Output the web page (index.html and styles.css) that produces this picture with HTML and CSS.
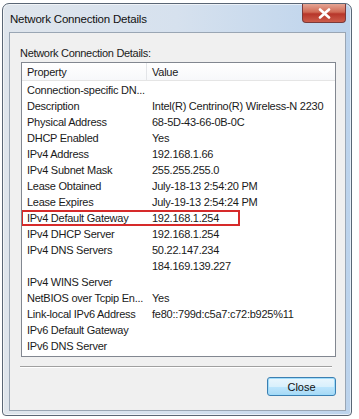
FILE: index.html
```html
<!DOCTYPE html>
<html lang="en">
<head>
    <meta charset="UTF-8">
    <meta name="viewport" content="width=device-width, initial-scale=1.0">
    <title>Network Connection Details</title>
    <link rel="stylesheet" href="styles.css">
</head>
<body>
    <div class="window">
        <div class="titlebar">
            <span class="title">Network Connection Details</span>
            <button class="close-x" aria-label="Close">
                <svg width="13" height="11" viewBox="0 0 13 11">
                    <path d="M2 1.5 L11 9.5 M11 1.5 L2 9.5" stroke="#fff" stroke-width="2.6" stroke-linecap="round"/>
                </svg>
            </button>
        </div>

        <div class="client">
            <div class="label">Network Connection Details:</div>

            <div class="listbox">
                <div class="row header">
                    <div class="cell">Property</div>
                    <div class="cell value">Value</div>
                </div>
                <div class="row"><div class="cell">Connection-specific DN...</div><div class="cell value"></div></div>
                <div class="row"><div class="cell">Description</div><div class="cell value">Intel(R) Centrino(R) Wireless-N 2230</div></div>
                <div class="row"><div class="cell">Physical Address</div><div class="cell value">68-5D-43-66-0B-0C</div></div>
                <div class="row"><div class="cell">DHCP Enabled</div><div class="cell value">Yes</div></div>
                <div class="row"><div class="cell">IPv4 Address</div><div class="cell value">192.168.1.66</div></div>
                <div class="row"><div class="cell">IPv4 Subnet Mask</div><div class="cell value">255.255.255.0</div></div>
                <div class="row"><div class="cell">Lease Obtained</div><div class="cell value">July-18-13 2:54:20 PM</div></div>
                <div class="row"><div class="cell">Lease Expires</div><div class="cell value">July-19-13 2:54:24 PM</div></div>
                <div class="row marked"><div class="cell">IPv4 Default Gateway</div><div class="cell value">192.168.1.254</div></div>
                <div class="row"><div class="cell">IPv4 DHCP Server</div><div class="cell value">192.168.1.254</div></div>
                <div class="row"><div class="cell">IPv4 DNS Servers</div><div class="cell value">50.22.147.234</div></div>
                <div class="row"><div class="cell"></div><div class="cell value">184.169.139.227</div></div>
                <div class="row"><div class="cell">IPv4 WINS Server</div><div class="cell value"></div></div>
                <div class="row"><div class="cell">NetBIOS over Tcpip En...</div><div class="cell value">Yes</div></div>
                <div class="row"><div class="cell">Link-local IPv6 Address</div><div class="cell value">fe80::799d:c5a7:c72:b925%11</div></div>
                <div class="row"><div class="cell">IPv6 Default Gateway</div><div class="cell value"></div></div>
                <div class="row"><div class="cell">IPv6 DNS Server</div><div class="cell value"></div></div>
            </div>

            <div class="separator"></div>

            <div class="actions">
                <button class="btn">Close</button>
            </div>
        </div>
    </div>
</body>
</html>
```

FILE: styles.css
```css
body {
    margin: 0;
    background: #fff;
    font-family: "Liberation Sans", Arial, sans-serif;
    font-size: 11px;
    color: #1a1a1a;
}

.window {
    margin: 3px 0 0 2px;
    width: 350px;
    height: 413px;
    box-sizing: border-box;
    border: 1px solid #5a6675;
    border-radius: 7px 7px 4px 4px;
    background: linear-gradient(90deg, #dfe5ec 0%, #d6e1ee 50%, #bcd3ec 100%);
    padding: 0 5px 4px 6px;
    display: flex;
    flex-direction: column;
    box-shadow: inset 0 0 0 1px rgba(255,255,255,0.6);
}

.titlebar {
    height: 28px;
    display: flex;
    align-items: flex-start;
    justify-content: space-between;
}

.title {
    font-size: 11.5px;
    letter-spacing: -0.2px;
    color: #111;
    padding: 9px 0 0 1px;
}

.close-x {
    width: 44px;
    height: 19px;
    border: 1px solid #7a3a3a;
    border-top: none;
    border-radius: 0 0 4px 4px;
    background: linear-gradient(#e5a594 0%, #d06a55 45%, #b7362a 55%, #cc5c4a 100%);
    display: flex;
    align-items: center;
    justify-content: center;
    padding: 0;
}

.client {
    flex: 1;
    background: #f0f0f0;
    border: 1px solid #9aa6b4;
    padding: 10px 9px 0 10px;
    display: flex;
    flex-direction: column;
}

.label {
    font-size: 11px;
    letter-spacing: -0.3px;
    color: #1a1a1a;
    height: 15px;
    padding-top: 4px;
}

.listbox {
    margin-left: 1px;
    height: 295px;
    box-sizing: border-box;
    background: #fff;
    border: 1px solid #828790;
    overflow: hidden;
}

.row {
    display: grid;
    grid-template-columns: 125px 1fr;
    height: 16px;
    line-height: 16px;
    font-size: 11px;
    letter-spacing: -0.25px;
    white-space: nowrap;
}

.row.header {
    height: 18px;
    line-height: 18px;
    box-sizing: border-box;
    margin-bottom: 1px;
    background: linear-gradient(#ffffff, #f7f8fa);
    border-bottom: 1px solid #e5e5e5;
}

.row.header .cell:first-child {
    border-right: 1px solid #e3e5e8;
}

.cell {
    padding-left: 5px;
    overflow: hidden;
}

.row.marked {
    position: relative;
}

.row.marked::after {
    content: "";
    position: absolute;
    left: -1px;
    top: 0;
    width: 219px;
    height: 16px;
    box-sizing: border-box;
    border: 2px solid #d62a2a;
}

.separator {
    margin: 9px 4px 0 0;
    height: 0;
    border-top: 1px solid #a0a0a0;
    border-bottom: 1px solid #fff;
}

.actions {
    display: flex;
    justify-content: flex-end;
    margin-top: 9px;
}

.btn {
    width: 69px;
    height: 19px;
    font-family: "Liberation Sans", Arial, sans-serif;
    font-size: 11px;
    color: #111;
    border: 1px solid #3c7fb1;
    border-radius: 3px;
    background: linear-gradient(#eaf6fd 0%, #d9f0fc 50%, #bee6fd 50%, #a7d9f5 100%);
    box-shadow: inset 0 0 0 1px #9fdcfb;
    padding: 0;
}
```
